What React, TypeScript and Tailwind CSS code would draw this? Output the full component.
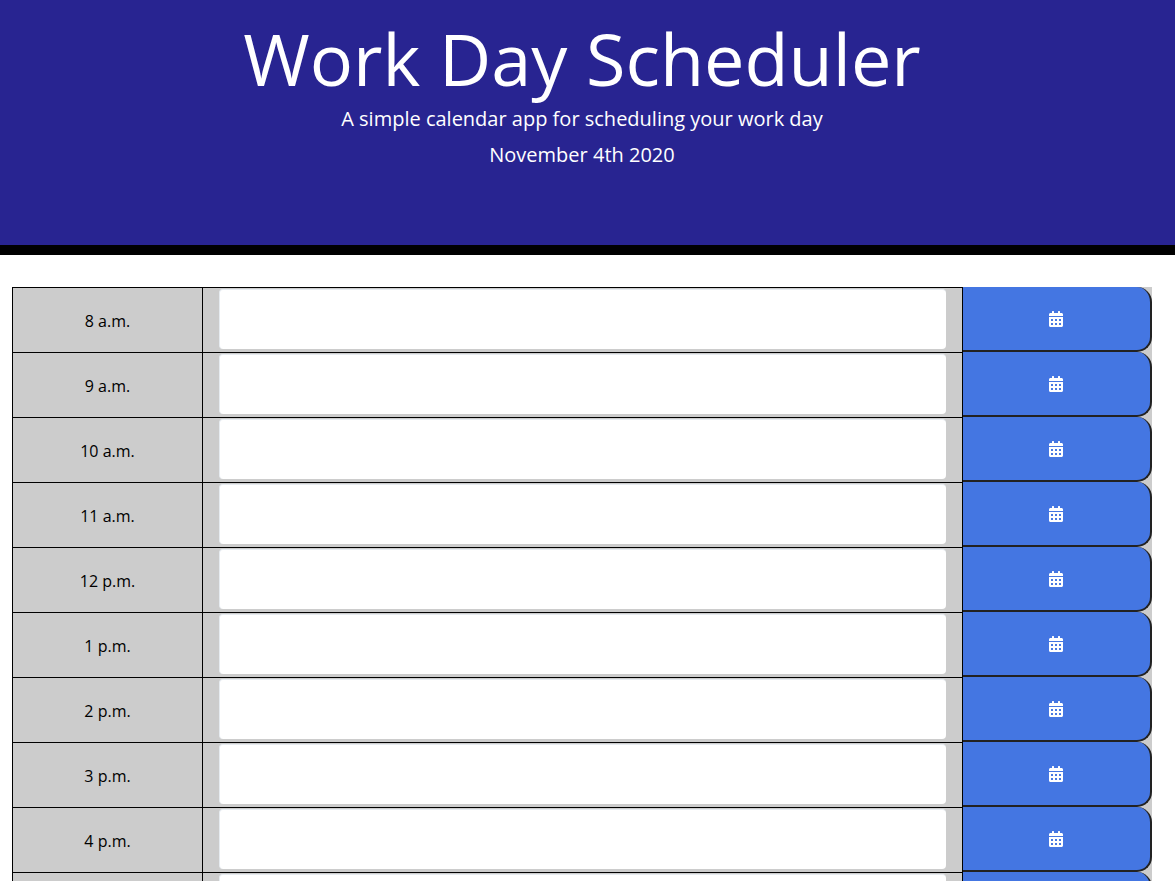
import { FaCalendarAlt } from "react-icons/fa";

const hours = ["8 a.m.", "9 a.m.", "10 a.m.", "11 a.m.", "12 p.m.", "1 p.m.", "2 p.m.", "3 p.m.", "4 p.m.", "5 p.m."];

export default function App() {
  return (
    <div className="bg-white overflow-hidden h-[881px] font-['Open_Sans',sans-serif]">
      <header className="h-[255px] bg-[#282491] border-b-[10px] border-black text-white text-center pr-[11px]">
        <h1 className="text-[72px] leading-[86px] font-normal pt-[15px] box-content">Work Day Scheduler</h1>
        <p className="text-[20px] leading-[30px] mt-[3px]">A simple calendar app for scheduling your work day</p>
        <p className="text-[20px] leading-[30px] mt-[6px]">November 4th 2020</p>
      </header>
      <main className="mt-[32px] ml-[12px] w-[1140px]">
        {hours.map((h) => (
          <div key={h} className="flex h-[65px] bg-[#cccccc]">
            <div className="w-[191px] border-l border-t border-r border-black flex items-center justify-center text-[16px] text-black pt-[1px]">
              {h}
            </div>
            <div className="w-[760px] border-t border-r border-black pl-[16px] pr-[16px] pt-[1px]">
              <div className="h-[60px] bg-white rounded-[4px] border-t border-l border-[#e6ebf0]" />
            </div>
            <button className="w-[189px] h-[65px] bg-[#4476e2] rounded-r-[15px] border-r-2 border-b-2 border-[#222222] flex items-center justify-center text-white text-[16px]">
              <FaCalendarAlt className="w-[14px] h-[16px] ml-[-1px]" />
            </button>
          </div>
        ))}
      </main>
    </div>
  );
}
